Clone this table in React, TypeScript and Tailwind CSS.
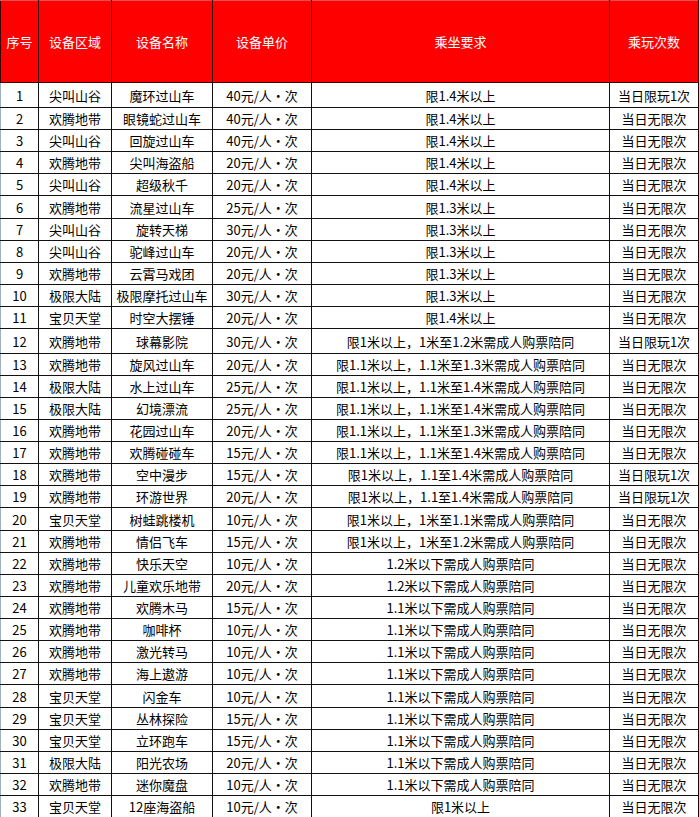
import React from 'react';

type Row = [string, string, string, string, string];

const rows: Row[] = [
  ['尖叫山谷', '魔环过山车', '40', '限1.4米以上', '当日限玩1次'],
  ['欢腾地带', '眼镜蛇过山车', '40', '限1.4米以上', '当日无限次'],
  ['尖叫山谷', '回旋过山车', '40', '限1.4米以上', '当日无限次'],
  ['欢腾地带', '尖叫海盗船', '20', '限1.4米以上', '当日无限次'],
  ['尖叫山谷', '超级秋千', '20', '限1.4米以上', '当日无限次'],
  ['欢腾地带', '流星过山车', '25', '限1.3米以上', '当日无限次'],
  ['尖叫山谷', '旋转天梯', '30', '限1.3米以上', '当日无限次'],
  ['尖叫山谷', '驼峰过山车', '20', '限1.3米以上', '当日无限次'],
  ['欢腾地带', '云霄马戏团', '20', '限1.3米以上', '当日无限次'],
  ['极限大陆', '极限摩托过山车', '30', '限1.3米以上', '当日无限次'],
  ['宝贝天堂', '时空大摆锤', '20', '限1.4米以上', '当日无限次'],
  ['欢腾地带', '球幕影院', '30', '限1米以上，1米至1.2米需成人购票陪同', '当日限玩1次'],
  ['欢腾地带', '旋风过山车', '20', '限1.1米以上，1.1米至1.3米需成人购票陪同', '当日无限次'],
  ['极限大陆', '水上过山车', '25', '限1.1米以上，1.1米至1.4米需成人购票陪同', '当日无限次'],
  ['极限大陆', '幻境漂流', '25', '限1.1米以上，1.1米至1.4米需成人购票陪同', '当日无限次'],
  ['欢腾地带', '花园过山车', '20', '限1.1米以上，1.1米至1.3米需成人购票陪同', '当日无限次'],
  ['欢腾地带', '欢腾碰碰车', '15', '限1.1米以上，1.1米至1.4米需成人购票陪同', '当日无限次'],
  ['欢腾地带', '空中漫步', '15', '限1米以上，1.1至1.4米需成人购票陪同', '当日限玩1次'],
  ['欢腾地带', '环游世界', '20', '限1米以上，1.1至1.4米需成人购票陪同', '当日限玩1次'],
  ['宝贝天堂', '树蛙跳楼机', '10', '限1米以上，1米至1.1米需成人购票陪同', '当日无限次'],
  ['欢腾地带', '情侣飞车', '15', '限1米以上，1米至1.2米需成人购票陪同', '当日无限次'],
  ['欢腾地带', '快乐天空', '10', '1.2米以下需成人购票陪同', '当日无限次'],
  ['欢腾地带', '儿童欢乐地带', '20', '1.2米以下需成人购票陪同', '当日无限次'],
  ['欢腾地带', '欢腾木马', '15', '1.1米以下需成人购票陪同', '当日无限次'],
  ['欢腾地带', '咖啡杯', '10', '1.1米以下需成人购票陪同', '当日无限次'],
  ['欢腾地带', '激光转马', '10', '1.1米以下需成人购票陪同', '当日无限次'],
  ['欢腾地带', '海上遨游', '10', '1.1米以下需成人购票陪同', '当日无限次'],
  ['宝贝天堂', '闪金车', '10', '1.1米以下需成人购票陪同', '当日无限次'],
  ['宝贝天堂', '丛林探险', '15', '1.1米以下需成人购票陪同', '当日无限次'],
  ['宝贝天堂', '立环跑车', '15', '1.1米以下需成人购票陪同', '当日无限次'],
  ['极限大陆', '阳光农场', '20', '1.1米以下需成人购票陪同', '当日无限次'],
  ['欢腾地带', '迷你魔盘', '10', '1.1米以下需成人购票陪同', '当日无限次'],
  ['宝贝天堂', '12座海盗船', '10', '限1米以上', '当日无限次'],
];

// row 1 and row 12 are a bit taller in the sheet
const rowHeight = (i: number) => {
  if (i === 0 || i === 11) return 'h-[25px]';
  if (i === 5 || i === 19 || i === 27) return 'h-[23px]';
  return 'h-[22px]';
};

const headers = ['序号', '设备区域', '设备名称', '设备单价', '乘坐要求', '乘玩次数'];

const App: React.FC = () => {
  return (
    <div className="h-[817px] w-[699px] overflow-hidden bg-white font-['Noto_Sans_CJK_SC',sans-serif] text-[13px] leading-none text-black">
      <table className="w-[698px] table-fixed border-collapse">
        <colgroup>
          <col className="w-[38px]" />
          <col className="w-[73px]" />
          <col className="w-[101px]" />
          <col className="w-[99px]" />
          <col className="w-[298px]" />
          <col className="w-[89px]" />
        </colgroup>
        <thead>
          <tr className="h-[82px] bg-[#ff0000] text-white">
            {headers.map((h) => (
              <th
                key={h}
                className="border border-[#3a0000] border-t-[#e85050] p-0 text-center font-normal"
              >
                {h}
              </th>
            ))}
          </tr>
        </thead>
        <tbody>
          {rows.map((r, i) => (
            <tr key={i} className={rowHeight(i)}>
              <td className="border border-[#111] border-l-[#9fb0c0] p-0 text-center">
                {i + 1}
              </td>
              <td className="border border-[#111] p-0 text-center">{r[0]}</td>
              <td className="border border-[#111] p-0 text-center">{r[1]}</td>
              <td className="border border-[#111] p-0 text-center">
                {r[2]}元/人・次
              </td>
              <td className="border border-[#111] p-0 text-center">{r[3]}</td>
              <td className="border border-[#111] p-0 text-center">{r[4]}</td>
            </tr>
          ))}
        </tbody>
      </table>
    </div>
  );
};

export default App;
